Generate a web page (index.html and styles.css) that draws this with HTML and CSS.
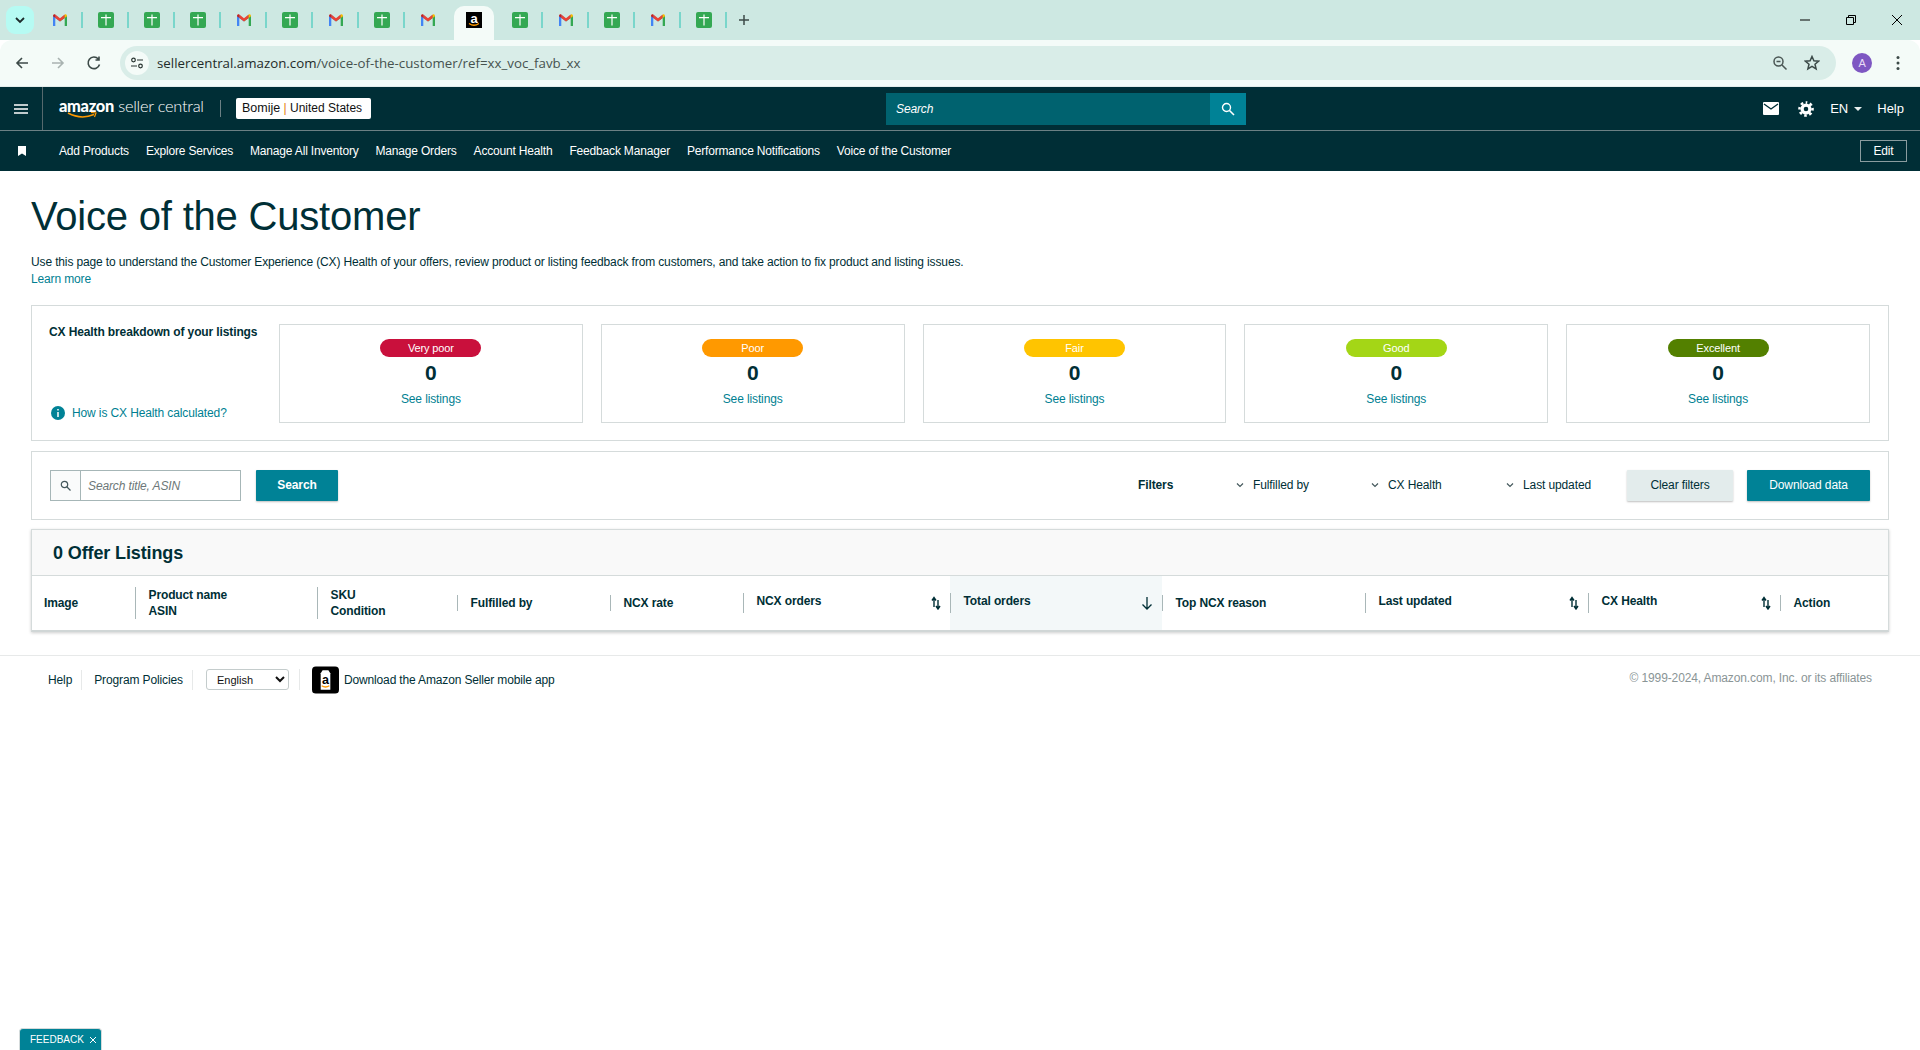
FILE: index.html
```html
<!DOCTYPE html>
<html>
<head>
    <title>Voice of the Customer</title>
    <link rel="stylesheet" href="styles.css">
</head>
<body>
    <svg class="defs" width="0" height="0">
        <symbol id="gmail" viewBox="0 0 16 16">
            <path d="M1 14V4l2.500-1L8 7.200 8 9.600 3.300 6v8z" fill="#4285f4"/>
            <path d="M15 14V4l-2.500-1L8 7.200v2.400L12.700 6v8z" fill="#34a853"/>
            <path d="M3.300 2.600 8 6.300l4.700-3.700v3.400L8 9.600 3.300 6z" fill="#ea4335"/>
            <path d="M1 4.200C1 2.400 2.500 2 3.300 2.600V6L1 4.300z" fill="#c5221f"/>
            <path d="M15 4.200c0-1.800-1.500-2.200-2.300-1.600V6L15 4.300z" fill="#fbbc04"/>
        </symbol>
        <symbol id="sheets" viewBox="0 0 16 16">
            <rect width="16" height="16" rx="2" fill="#34a853"/>
            <path d="M3 5h4.400V2.500h1.200V5H13v1.200H8.600V13.500H7.400V6.200H3z" fill="#fff"/>
        </symbol>
        <symbol id="sort" viewBox="0 0 10 14">
            <path d="M3 11V2.500M1 4.500 3 1.500 5 4.500" fill="none" stroke="#002f36" stroke-width="1.400"/>
            <path d="M7 4v8M5 10 7 13 9 10" fill="none" stroke="#002f36" stroke-width="1.400"/>
        </symbol>
        <symbol id="chev" viewBox="0 0 8 8">
            <path d="M1 2.500 4 5.500 7 2.500" fill="none" stroke="#44585c" stroke-width="1.200"/>
        </symbol>
    </svg>

    <div class="tabstrip">
        <div class="tabmenu"><svg width="12" height="8" viewBox="0 0 12 8"><path d="M2 2 6 6 10 2" fill="none" stroke="#1d2b2b" stroke-width="1.800"/></svg></div>
        <div class="tabs">
            <div class="tab sep"><svg class="fav"><use href="#gmail"/></svg></div>
            <div class="tab sep"><svg class="fav"><use href="#sheets"/></svg></div>
            <div class="tab sep"><svg class="fav"><use href="#sheets"/></svg></div>
            <div class="tab sep"><svg class="fav"><use href="#sheets"/></svg></div>
            <div class="tab sep"><svg class="fav"><use href="#gmail"/></svg></div>
            <div class="tab sep"><svg class="fav"><use href="#sheets"/></svg></div>
            <div class="tab sep"><svg class="fav"><use href="#gmail"/></svg></div>
            <div class="tab sep"><svg class="fav"><use href="#sheets"/></svg></div>
            <div class="tab"><svg class="fav"><use href="#gmail"/></svg></div>
            <div class="tab active">
                <svg class="fav" viewBox="0 0 16 16">
                    <rect width="16" height="16" fill="#000"/>
                    <text x="8" y="10.500" text-anchor="middle" class="fav-a">a</text>
                    <path d="M3 11.500q5 3.500 10 0" fill="none" stroke="#ff9900" stroke-width="1.300"/>
                </svg>
            </div>
            <div class="tab sep"><svg class="fav"><use href="#sheets"/></svg></div>
            <div class="tab sep"><svg class="fav"><use href="#gmail"/></svg></div>
            <div class="tab sep"><svg class="fav"><use href="#sheets"/></svg></div>
            <div class="tab sep"><svg class="fav"><use href="#gmail"/></svg></div>
            <div class="tab sep"><svg class="fav"><use href="#sheets"/></svg></div>
        </div>
        <svg class="newtab" width="12" height="12" viewBox="0 0 12 12"><path d="M6 1v10M1 6h10" stroke="#3c4a48" stroke-width="1.500"/></svg>
        <div class="winbtns">
            <svg width="12" height="12" viewBox="0 0 12 12"><path d="M1 6h10" stroke="#000"/></svg>
            <svg width="12" height="12" viewBox="0 0 12 12"><path d="M1.500 3.500h7v7h-7zM3.500 3.500v-2h7v7h-2" fill="none" stroke="#000"/></svg>
            <svg width="12" height="12" viewBox="0 0 12 12"><path d="M1 1l10 10M11 1 1 11" stroke="#000"/></svg>
        </div>
    </div>

    <div class="toolbar">
        <svg class="tb-back" width="16" height="16" viewBox="0 0 16 16"><path d="M14 8H3M8 3 3 8l5 5" fill="none" stroke="#3c4a48" stroke-width="1.600"/></svg>
        <svg class="tb-fwd" width="16" height="16" viewBox="0 0 16 16"><path d="M2 8h11M8 3l5 5-5 5" fill="none" stroke="#a9b3b1" stroke-width="1.600"/></svg>
        <svg class="tb-reload" width="16" height="16" viewBox="0 0 16 16"><path d="M13.500 9.500A5.800 5.800 0 1 1 12.300 4M13 1.500V5H9.500" fill="none" stroke="#3c4a48" stroke-width="1.600"/></svg>
        <div class="omnibox">
            <span class="site-icon">
                <svg width="14" height="12" viewBox="0 0 14 12"><circle cx="3.500" cy="3" r="1.800" fill="none" stroke="#26322f" stroke-width="1.200"/><path d="M7 3h6M1 9h6" stroke="#26322f" stroke-width="1.200"/><circle cx="10.500" cy="9" r="1.800" fill="none" stroke="#26322f" stroke-width="1.200"/></svg>
            </span>
            <span class="url">sellercentral.amazon.com<span class="url-path">/voice-of-the-customer/ref=xx_voc_favb_xx</span></span>
            <svg class="omni-zoom" width="16" height="16" viewBox="0 0 16 16"><circle cx="6.500" cy="6.500" r="4.500" fill="none" stroke="#4a5654" stroke-width="1.500"/><path d="M4.500 6.500h4M10 10l4.500 4.500" stroke="#4a5654" stroke-width="1.500"/></svg>
            <svg class="omni-star" width="16" height="16" viewBox="0 0 16 16"><path d="M8 1.500l1.900 4.300 4.600.4-3.500 3 1.100 4.600L8 11.300l-4.100 2.500L5 9.200l-3.500-3 4.600-.4z" fill="none" stroke="#3c4a48" stroke-width="1.500"/></svg>
        </div>
        <span class="avatar">A</span>
        <svg class="tb-dots" width="4" height="16" viewBox="0 0 4 16"><circle cx="2" cy="2.500" r="1.500" fill="#3c4a48"/><circle cx="2" cy="8" r="1.500" fill="#3c4a48"/><circle cx="2" cy="13.500" r="1.500" fill="#3c4a48"/></svg>
    </div>

    <header class="topnav">
        <div class="topbar">
            <div class="burger"><svg width="14" height="10" viewBox="0 0 14 10"><path d="M0 1h14M0 5h14M0 9h14" stroke="#fff" stroke-width="1.500"/></svg></div>
            <div class="logo">
                <div class="logo-text"><b>amazon</b> seller central</div>
                <svg class="smile" width="30" height="7" viewBox="0 0 30 7"><path d="M1 1q13 7 26 1.500" fill="none" stroke="#ff9900" stroke-width="1.500"/><path d="M24 .5l5 .5-1.500 4" fill="none" stroke="#ff9900" stroke-width="1.200"/></svg>
            </div>
            <div class="store"><b>Bomije</b> <i>|</i> United States</div>
            <div class="topsearch">
                <span class="topsearch-text">Search</span>
                <span class="topsearch-btn"><svg width="14" height="14" viewBox="0 0 14 14"><circle cx="5.500" cy="5.500" r="4" fill="none" stroke="#fff" stroke-width="1.400"/><path d="M8.500 8.500l4.500 4.500" stroke="#fff" stroke-width="1.600"/></svg></span>
            </div>
            <div class="topright">
                <svg class="mail" width="16" height="13" viewBox="0 0 16 13"><path d="M1 0h14a1 1 0 0 1 1 1v11a1 1 0 0 1-1 1H1a1 1 0 0 1-1-1V1a1 1 0 0 1 1-1z" fill="#fff"/><path d="M1 2l7 5 7-5" fill="none" stroke="#002e36" stroke-width="1.400"/></svg>
                <svg class="gear" width="16" height="16" viewBox="0 0 16 16"><circle cx="8" cy="8" r="3.900" fill="none" stroke="#fff" stroke-width="3.200"/><circle cx="8" cy="8" r="6.500" fill="none" stroke="#fff" stroke-width="2.600" stroke-dasharray="2.600 2.500" stroke-dashoffset="1.300" transform="rotate(-90 8 8)"/></svg>
                <span class="lang">EN</span>
                <span class="caret"></span>
                <span class="tophelp">Help</span>
            </div>
        </div>
        <nav class="favbar">
            <svg class="bookmark" width="8" height="10" viewBox="0 0 8 10"><path d="M0 0h8v10L4 7.500 0 10z" fill="#fff"/></svg>
            <a>Add Products</a>
            <a>Explore Services</a>
            <a>Manage All Inventory</a>
            <a>Manage Orders</a>
            <a>Account Health</a>
            <a>Feedback Manager</a>
            <a>Performance Notifications</a>
            <a>Voice of the Customer</a>
            <span class="edit">Edit</span>
        </nav>
    </header>

    <main class="page">
        <h1>Voice of the Customer</h1>
        <p class="intro">Use this page to understand the Customer Experience (CX) Health of your offers, review product or listing feedback from customers, and take action to fix product and listing issues.<br><a class="link">Learn more</a></p>

        <section class="panel health">
            <div class="health-side">
                <div class="health-title">CX Health breakdown of your listings</div>
                <a class="link how">
                    <svg width="14" height="14" viewBox="0 0 14 14"><circle cx="7" cy="7" r="7" fill="#008296"/><path d="M7 3v1.600M7 6v5" stroke="#fff" stroke-width="1.500"/></svg>
                    How is CX Health calculated?
                </a>
            </div>
            <div class="tile"><span class="badge very-poor">Very poor</span><span class="count">0</span><a class="link see">See listings</a></div>
            <div class="tile"><span class="badge poor">Poor</span><span class="count">0</span><a class="link see">See listings</a></div>
            <div class="tile"><span class="badge fair">Fair</span><span class="count">0</span><a class="link see">See listings</a></div>
            <div class="tile"><span class="badge good">Good</span><span class="count">0</span><a class="link see">See listings</a></div>
            <div class="tile"><span class="badge excellent">Excellent</span><span class="count">0</span><a class="link see">See listings</a></div>
        </section>

        <section class="panel filters">
            <div class="searchbox">
                <span class="searchbox-icon"><svg width="11" height="11" viewBox="0 0 11 11"><circle cx="4.500" cy="4.500" r="3.200" fill="none" stroke="#44585c" stroke-width="1.200"/><path d="M7 7l3.500 3.500" stroke="#44585c" stroke-width="1.300"/></svg></span>
                <span class="searchbox-text">Search title, ASIN</span>
            </div>
            <button class="btn btn-teal btn-search">Search</button>
            <span class="filters-label">Filters</span>
            <span class="drop"><svg width="8" height="8"><use href="#chev"/></svg>Fulfilled by</span>
            <span class="drop"><svg width="8" height="8"><use href="#chev"/></svg>CX Health</span>
            <span class="drop drop-last"><svg width="8" height="8"><use href="#chev"/></svg>Last updated</span>
            <button class="btn btn-grey">Clear filters</button>
            <button class="btn btn-teal btn-download">Download data</button>
        </section>

        <section class="listings">
            <h2>0 Offer Listings</h2>
            <div class="thead">
                <div class="th first"><div class="th-in">Image</div></div>
                <div class="th"><div class="th-in">Product name<br>ASIN</div></div>
                <div class="th"><div class="th-in">SKU<br>Condition</div></div>
                <div class="th"><div class="th-in">Fulfilled by</div></div>
                <div class="th"><div class="th-in">NCX rate</div></div>
                <div class="th"><div class="th-in sortable">NCX orders<svg width="10" height="14"><use href="#sort"/></svg></div></div>
                <div class="th sorted"><div class="th-in sortable">Total orders<svg width="12" height="14" viewBox="0 0 12 14"><path d="M6 1v12M1.500 8.500 6 13l4.500-4.500" fill="none" stroke="#002f36" stroke-width="1.300"/></svg></div></div>
                <div class="th"><div class="th-in">Top NCX reason</div></div>
                <div class="th"><div class="th-in sortable">Last updated<svg width="10" height="14"><use href="#sort"/></svg></div></div>
                <div class="th"><div class="th-in sortable">CX Health<svg width="10" height="14"><use href="#sort"/></svg></div></div>
                <div class="th"><div class="th-in">Action</div></div>
            </div>
        </section>
    </main>

    <footer class="foot">
        <a>Help</a>
        <a class="foot-policies">Program Policies</a>
        <div class="foot-select">
            <select><option>English</option></select>
        </div>
        <svg class="appicon" width="27" height="28" viewBox="0 0 28 28">
            <rect width="28" height="28" rx="4" fill="#000"/>
            <path d="M9 7l2-3h6l2 3v17H9z" fill="#fff"/>
            <text x="14" y="18" text-anchor="middle" class="app-a">a</text>
            <path d="M10 20q4 2.500 8 0" fill="none" stroke="#ff9900" stroke-width="1.300"/>
        </svg>
        <a class="foot-app">Download the Amazon Seller mobile app</a>
        <span class="copyright">© 1999-2024, Amazon.com, Inc. or its affiliates</span>
    </footer>

    <div class="feedback">FEEDBACK <svg width="8" height="8" viewBox="0 0 8 8"><path d="M1 1l6 6M7 1 1 7" stroke="#fff"/></svg></div>
</body>
</html>
```

FILE: styles.css
```css
* {
    margin: 0;
    padding: 0;
    box-sizing: border-box;
    font-family: "Liberation Sans", Arial, sans-serif;
}

html, body {
    height: 1050px;
    overflow: hidden;
    background: #fff;
    color: #002f36;
    font-size: 12px;
    letter-spacing: -.12px;
}

.defs {
    display: block;
    height: 0;
}

/* browser chrome */
.tabstrip {
    display: flex;
    align-items: center;
    height: 40px;
    background: #cde8e2;
    padding-left: 6px;
}

.tabmenu {
    display: flex;
    align-items: center;
    justify-content: center;
    width: 28px;
    height: 28px;
    background: #b6fbf3;
    border-radius: 9px;
    margin-right: 3px;
}

.tabs {
    display: flex;
    align-self: stretch;
}

.tab {
    display: flex;
    align-items: center;
    justify-content: center;
    width: 46px;
    height: 40px;
}

.tab.sep {
    background: linear-gradient(#79d6cb, #79d6cb) right 12px / 2px 16px no-repeat;
}

.tab.active {
    background: #f4fbf8;
    border-radius: 10px 10px 0 0;
    width: 40px;
    margin: 6px 3px 0;
    height: 34px;
    padding-bottom: 6px;
}

.fav {
    width: 16px;
    height: 16px;
}

.fav-a {
    font-size: 13px;
    font-weight: bold;
    fill: #fff;
}

.newtab {
    margin-left: 11px;
}

.winbtns {
    display: flex;
    gap: 34px;
    margin-left: auto;
    padding-right: 17px;
}

.toolbar {
    display: flex;
    align-items: center;
    height: 47px;
    padding-bottom: 1px;
    background: #f4fbf8;
    border-radius: 12px 12px 0 0;
    border-bottom: 1px solid #e3ebe9;
}

.tb-back {
    margin-left: 14px;
}

.tb-fwd,
.tb-reload {
    margin-left: 20px;
}

.omnibox {
    display: flex;
    align-items: center;
    width: 1716px;
    height: 34px;
    margin-left: 18px;
    background: #d9ede8;
    border-radius: 17px;
    padding-left: 5px;
}

.site-icon {
    display: flex;
    align-items: center;
    justify-content: center;
    width: 24px;
    height: 24px;
    background: #f4fbf8;
    border-radius: 50%;
}

.url {
    margin-left: 8px;
    font-family: "Open Sans", sans-serif;
    font-size: 13.300px;
    letter-spacing: 0;
    color: #1f2b29;
}

.url-path {
    font-family: "Open Sans", sans-serif;
    color: #46524f;
}

.omni-zoom {
    margin-left: auto;
}

.omni-star {
    margin-left: 16px;
    margin-right: 16px;
}

.avatar {
    display: flex;
    align-items: center;
    justify-content: center;
    width: 20px;
    height: 20px;
    margin-left: 16px;
    background: #7e57c2;
    border-radius: 50%;
    color: #e8dcf7;
    font-size: 11px;
}

.tb-dots {
    margin-left: 24px;
}

/* seller central header */
.topnav {
    background: #002e36;
    color: #fff;
}

.topbar {
    display: flex;
    align-items: center;
    height: 44px;
    border-bottom: 1px solid #6b8084;
}

.burger {
    display: flex;
    align-items: center;
    justify-content: center;
    width: 43px;
    height: 43px;
    border-right: 1px solid #56696d;
}

.logo {
    width: 176px;
    margin-left: 16px;
    height: 28px;
    display: flex;
    flex-direction: column;
}

.logo-text {
    font-family: "Lato", sans-serif;
    font-size: 16.400px;
    font-weight: 300;
    letter-spacing: -.25px;
    line-height: 21px;
    white-space: nowrap;
}

.logo-text b {
    font-family: "Lato", sans-serif;
    font-weight: 900;
    letter-spacing: -.3px;
}

.smile {
    margin: -4px 0 0 8px;
}

.store {
    width: 135px;
    height: 21px;
    line-height: 21px;
    margin-left: 1px;
    padding-left: 6px;
    background: #fff;
    border-radius: 2px;
    color: #111;
    font-size: 12px;
    letter-spacing: 0;
    white-space: nowrap;
    box-shadow: -17px 0 0 -2px #002e36, -18px 0 0 -2px #6b8084;
}

.store b {
    font-weight: normal;
    font-size: 12.500px;
}

.store i {
    font-style: normal;
    color: #e47911;
}

.topsearch {
    display: flex;
    width: 360px;
    height: 32px;
    margin-left: 515px;
    background: #00626f;
}

.topsearch-text {
    flex: 1;
    padding-left: 10px;
    font-style: italic;
    line-height: 32px;
}

.topsearch-btn {
    display: flex;
    align-items: center;
    justify-content: center;
    width: 36px;
    background: #008296;
}

.topright {
    display: flex;
    align-items: center;
    margin-left: auto;
    padding-right: 16px;
    font-size: 13px;
    letter-spacing: 0;
}

.gear {
    margin-left: 19px;
}

.lang {
    margin-left: 16px;
}

.caret {
    width: 0;
    height: 0;
    margin: 1px 0 0 6px;
    border: 4px solid transparent;
    border-top: 4px solid #e8eeee;
    border-bottom: 0;
}

.tophelp {
    margin-left: 15px;
}

.favbar {
    display: flex;
    align-items: center;
    height: 40px;
    padding-left: 18px;
    gap: 17px;
    letter-spacing: -.18px;
}

.favbar a {
    white-space: nowrap;
}

.bookmark {
    margin-right: 16px;
}

.edit {
    margin-left: auto;
    margin-right: 13px;
    width: 47px;
    height: 22px;
    border: 1px solid #8a9c9f;
    text-align: center;
    line-height: 20px;
}

/* page */
.page {
    padding: 21px 31px 0;
}

h1 {
    font-size: 40px;
    font-weight: normal;
    line-height: 48px;
    letter-spacing: -.2px;
}

.intro {
    margin-top: 14px;
    margin-bottom: 17px;
    line-height: 17px;
    letter-spacing: -.135px;
}

.link {
    color: #007f92;
}

.panel {
    display: flex;
    border: 1px solid #d5dbdb;
    padding: 18px;
}

.health {
    gap: 18px;
    margin-bottom: 10px;
    padding-bottom: 17px;
}

.health-side {
    flex: 0 0 211px;
    display: flex;
    flex-direction: column;
    justify-content: space-between;
    padding-bottom: 1px;
}

.health-title {
    margin-left: -1px;
    font-weight: bold;
    line-height: 16px;
    white-space: nowrap;
}

.how {
    display: flex;
    align-items: center;
    gap: 7px;
    margin-left: 1px;
    padding-bottom: 2px;
}

.tile {
    flex: 1;
    display: flex;
    flex-direction: column;
    align-items: center;
    height: 99px;
    padding-top: 14px;
    border: 1px solid #d5dbdb;
}

.badge {
    width: 101px;
    height: 18px;
    border-radius: 9px;
    color: #fff;
    text-align: center;
    font-size: 11px;
    line-height: 18px;
}

.very-poor { background: #c9103c; }
.poor { background: #ff9900; }
.fair { background: #ffc400; }
.good { background: #a4d616; }
.excellent { background: #538000; }

.count {
    margin-top: 4px;
    font-size: 21px;
    font-weight: bold;
    line-height: 24px;
}

.see {
    margin-top: 6px;
    line-height: 16px;
}

.filters {
    align-items: center;
    height: 69px;
    margin-bottom: 9px;
}

.searchbox {
    display: flex;
    width: 191px;
    height: 31px;
    border: 1px solid #a6b6b7;
}

.searchbox-icon {
    display: flex;
    align-items: center;
    justify-content: center;
    width: 30px;
    background: #fafbfb;
    border-right: 1px solid #a6b6b7;
}

.searchbox-text {
    padding-left: 7px;
    color: #6c7778;
    font-style: italic;
    line-height: 31px;
}

.btn {
    height: 31px;
    padding-bottom: 2px;
    border: 0;
    border-radius: 1px;
    font-size: 12px;
    letter-spacing: -.12px;
    box-shadow: 0 1px 2px rgba(0, 0, 0, .25);
}

.btn-teal {
    background: #008296;
    color: #fff;
}

.btn-grey {
    background: #e3ecec;
    color: #002f36;
    width: 106px;
    margin-left: 36px;
}

.btn-search {
    width: 82px;
    margin-left: 15px;
    font-weight: bold;
}

.btn-download {
    width: 123px;
    margin-left: 14px;
}

.filters-label {
    margin-left: auto;
    width: 98px;
    font-weight: bold;
    padding-bottom: 1px;
}

.drop {
    display: flex;
    align-items: center;
    gap: 9px;
    width: 135px;
    white-space: nowrap;
    padding-bottom: 1px;
}

.drop-last {
    width: auto;
}

.listings {
    border: 1px solid #d5dbdb;
    border-bottom: 2px solid #d0d6d6;
    box-shadow: 0 1px 3px rgba(0, 0, 0, .2);
}

.listings h2 {
    height: 46px;
    padding-left: 21px;
    background: #f9f9f9;
    border-bottom: 1px solid #d5dbdb;
    font-size: 18px;
    line-height: 46px;
}

.thead {
    display: grid;
    grid-template-columns: 103px 182px 140px 153px 133px 207px 212px 203px 223px 192px 1fr;
    height: 54px;
    font-weight: bold;
}

.th {
    display: flex;
    align-items: center;
}

.th-in {
    flex: 1;
    padding-left: 12.500px;
    border-left: 1px solid #a9b7b8;
    line-height: 16px;
    white-space: nowrap;
}

.th.first .th-in {
    border-left: 0;
    padding-left: 12px;
}

.sortable {
    display: flex;
    justify-content: space-between;
    height: 20px;
    padding-right: 9px;
}

.sortable svg {
    margin-top: 3px;
}

.sorted {
    background: #f3f8f9;
}

/* footer */
.foot {
    display: flex;
    align-items: center;
    height: 48px;
    margin-top: 23px;
    padding: 0 48px;
    border-top: 1px solid #e7e9e9;
}

.foot a {
    white-space: nowrap;
}

.foot-policies {
    margin-left: 9px;
    padding: 3px 9px 3px 12px;
    border-left: 1px solid #e7e9e9;
    border-right: 1px solid #e7e9e9;
}

.foot-select {
    margin-left: 13px;
    padding-right: 10px;
    border-right: 1px solid #e7e9e9;
}

.foot-select select {
    display: block;
    width: 83px;
    height: 21px;
    padding-left: 6px;
    background: #fff;
    border: 1px solid #c4cccc;
    border-radius: 3px;
    font-size: 11px;
    color: #111;
}

.appicon {
    margin: 0 5px 0 12px;
}

.app-a {
    font-size: 13px;
    font-weight: bold;
    fill: #000;
}

.foot-app {
    letter-spacing: -.15px;
}

.copyright {
    margin-left: auto;
    color: #8a9596;
    margin-bottom: 4px;
}

.feedback {
    position: fixed;
    left: 19px;
    bottom: 0;
    display: flex;
    align-items: center;
    gap: 5px;
    width: 83px;
    height: 22px;
    padding-left: 10px;
    background: #008296;
    border: 1px solid #d5dbdb;
    border-bottom: 0;
    border-radius: 4px 4px 0 0;
    color: #fff;
    font-size: 10px;
    letter-spacing: 0;
    white-space: nowrap;
}
```
